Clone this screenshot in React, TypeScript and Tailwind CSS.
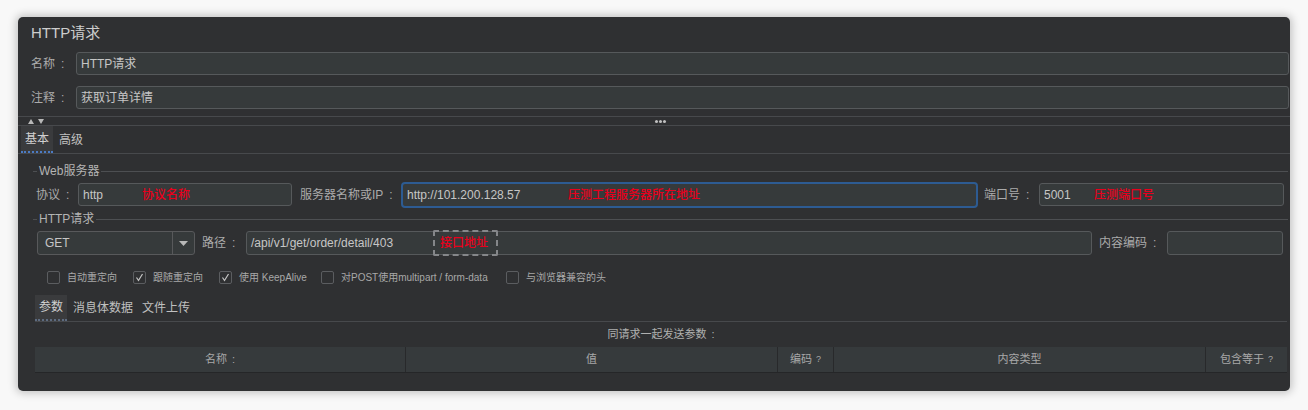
import { ReactNode } from "react";

const FONT = "font-['Liberation_Sans','Noto_Sans_CJK_SC',sans-serif]";

const Label = ({ w, children }: { w: string; children: ReactNode }) => (
  <div className={`${w} shrink-0 text-[12px] text-[#ababab] whitespace-nowrap`}>
    {children}
    <span className="ml-[6px]">:</span>
  </div>
);

const Input = ({
  className,
  value,
  note,
  noteLeft,
}: {
  className: string;
  value?: string;
  note?: string;
  noteLeft?: string;
}) => (
  <div
    className={`${className} h-full flex items-center bg-[#363a3b] border border-[#56595b] rounded-[3px] px-[4px] text-[12px] text-[#c6c6c6] whitespace-nowrap`}
  >
    {value && <span className={noteLeft}>{value}</span>}
    {note && <span className="text-[#e8001c] font-medium">{note}</span>}
  </div>
);

const Legend = ({ title }: { title: string }) => (
  <div className="flex items-center h-[14px] ml-[15px] mr-[2px]">
    <div className="w-[4px] h-px bg-[#4d4f52]" />
    <span className="px-[2px] text-[12px] text-[#b4b4b4]">{title}</span>
    <div className="flex-1 h-px bg-[#4d4f52]" />
  </div>
);

const Check = ({ checked, label, w }: { checked?: boolean; label: string; w: string }) => (
  <div className={`${w} shrink-0 flex items-center gap-[7px]`}>
    <div className="w-[13px] h-[13px] border border-[#5b5d60] rounded-[2px] flex items-center justify-center">
      {checked && (
        <svg width="9" height="9" viewBox="0 0 9 9">
          <polyline points="1.5,4.5 3.5,7.5 7.5,1" fill="none" stroke="#c8c8c8" strokeWidth="1.2" />
        </svg>
      )}
    </div>
    <span className="text-[10px] text-[#a8a8a8] whitespace-nowrap">{label}</span>
  </div>
);

const Q = () => <span className="ml-[4px] text-[9px]">?</span>;

export default function App() {
  return (
    <div className={`min-h-[410px] bg-[#f8f8f8] pt-[17px] pl-[18px] ${FONT}`}>
      <div className="w-[1272px] h-[374px] rounded-[5px] bg-[#2f3032] shadow-[0_0_8px_2px_rgba(0,0,0,0.22)] flex flex-col overflow-hidden">
        <div className="h-[32px] flex items-center pl-[13px] text-[15px] text-[#cdcdcd]">HTTP请求</div>

        <div className="mt-[3px] h-[23px] flex items-center pl-[13px] pr-[1px]">
          <Label w="w-[45px]">名称</Label>
          <Input className="flex-1" value="HTTP请求" />
        </div>
        <div className="mt-[11px] h-[23px] flex items-center pl-[13px] pr-[1px]">
          <Label w="w-[45px]">注释</Label>
          <Input className="flex-1" value="获取订单详情" />
        </div>

        <div className="mt-[7px] h-[10px] border-y border-[#47494c] grid grid-cols-[1fr_auto_1fr] items-center">
          <div className="flex items-center gap-[4px] pl-[10px]">
            <svg width="6" height="5" viewBox="0 0 6 5"><polygon points="3,0 6,5 0,5" fill="#b8b8b8" /></svg>
            <svg width="6" height="5" viewBox="0 0 6 5"><polygon points="0,0 6,0 3,5" fill="#b8b8b8" /></svg>
          </div>
          <div className="flex gap-[1px] pl-[12px]">
            <div className="w-[3px] h-[3px] rounded-full bg-[#c0c0c0]" />
            <div className="w-[3px] h-[3px] rounded-full bg-[#c0c0c0]" />
            <div className="w-[3px] h-[3px] rounded-full bg-[#c0c0c0]" />
          </div>
          <div />
        </div>

        <div className="h-[28px] border-b border-[#47494c] flex items-stretch pl-[3px] text-[12px]">
          <div className="w-[32px] flex items-center justify-center bg-[#3a3b3d] border-b-2 border-dotted border-[#4b7bc4] text-[#d0d0d0]">
            基本
          </div>
          <div className="ml-[6px] flex items-center text-[#c0c0c0]">高级</div>
        </div>

        <div className="mt-[10px]">
          <Legend title="Web服务器" />
        </div>
        <div className="mt-[5px] h-[23px] flex items-center pl-[18px] pr-[6px]">
          <Label w="w-[42px]">协议</Label>
          <Input className="w-[214px]" value="http" noteLeft="w-[59px]" note="协议名称" />
          <div className="w-[8px]" />
          <Label w="w-[101px]">服务器名称或IP</Label>
          <div className="w-[577px] h-[26px] flex items-center bg-[#363a3b] border-2 border-[#2d5b92] rounded-[4px] px-[4px] text-[12px] text-[#c6c6c6] whitespace-nowrap">
            <span className="w-[161px]">http://101.200.128.57</span>
            <span className="text-[#e8001c] font-medium">压测工程服务器所在地址</span>
          </div>
          <div className="w-[6px]" />
          <Label w="w-[55px]">端口号</Label>
          <Input className="flex-1" value="5001" noteLeft="w-[50px]" note="压测端口号" />
        </div>

        <div className="mt-[6px]">
          <Legend title="HTTP请求" />
        </div>
        <div className="mt-[5px] h-[24px] flex items-center pl-[19px] pr-[7px]">
          <div className="w-[158px] h-full flex bg-[#363a3b] border border-[#58595b] rounded-[3px] text-[12px] text-[#c6c6c6]">
            <div className="flex-1 flex items-center pl-[7px]">GET</div>
            <div className="w-[22px] border-l border-[#58595b] flex items-center justify-center">
              <svg width="9" height="5" viewBox="0 0 9 5"><polygon points="0,0 9,0 4.5,5" fill="#b8b8b8" /></svg>
            </div>
          </div>
          <div className="w-[7px]" />
          <Label w="w-[44px]">路径</Label>
          <div className="relative w-[846px] h-full">
            <Input className="w-full" value="/api/v1/get/order/detail/403" />
            <div className="absolute left-[187px] top-[-1px] w-[65px] h-[26px] border-2 border-dashed border-[#85878a] rounded-[2px] flex items-center pl-[5px] text-[12px] text-[#e8001c] font-medium">
              接口地址
            </div>
          </div>
          <div className="w-[7px]" />
          <Label w="w-[68px]">内容编码</Label>
          <Input className="flex-1" />
        </div>

        <div className="mt-[15px] h-[14px] flex items-center pl-[29px]">
          <Check w="w-[86px]" label="自动重定向" />
          <Check w="w-[86px]" checked label="跟随重定向" />
          <Check w="w-[102px]" checked label="使用 KeepAlive" />
          <Check w="w-[185px]" label="对POST使用multipart / form-data" />
          <Check w="w-[160px]" label="与浏览器兼容的头" />
        </div>

        <div className="mt-[11px] ml-[17px] mr-[3px] flex flex-col">
          <div className="h-[27px] border-b border-[#47494c] flex items-stretch text-[12px]">
            <div className="w-[32px] flex items-center justify-center bg-[#3a3b3d] border-b-2 border-dotted border-[#5d6b80] text-[#d0d0d0]">
              参数
            </div>
            <div className="ml-[6px] flex items-center text-[#c0c0c0]">消息体数据</div>
            <div className="ml-[9px] flex items-center text-[#c0c0c0]">文件上传</div>
          </div>
          <div className="h-[25px] flex items-center justify-center text-[11px] text-[#b0b0b0]">
            同请求一起发送参数<span className="ml-[5px]">:</span>
          </div>
          <div className="h-[26px] flex bg-[#363a3c] border-b border-[#252628] text-[11px] text-[#a8a8a8]">
            <div className="w-[371px] border-r border-[#28292b] flex items-center justify-center">
              名称<span className="ml-[5px]">:</span>
            </div>
            <div className="w-[372px] border-r border-[#28292b] flex items-center justify-center">值</div>
            <div className="w-[56px] border-r border-[#28292b] flex items-center justify-center">
              编码<Q />
            </div>
            <div className="w-[372px] border-r border-[#28292b] flex items-center justify-center">内容类型</div>
            <div className="flex-1 flex items-center justify-center">
              包含等于<Q />
            </div>
          </div>
        </div>
      </div>
    </div>
  );
}
